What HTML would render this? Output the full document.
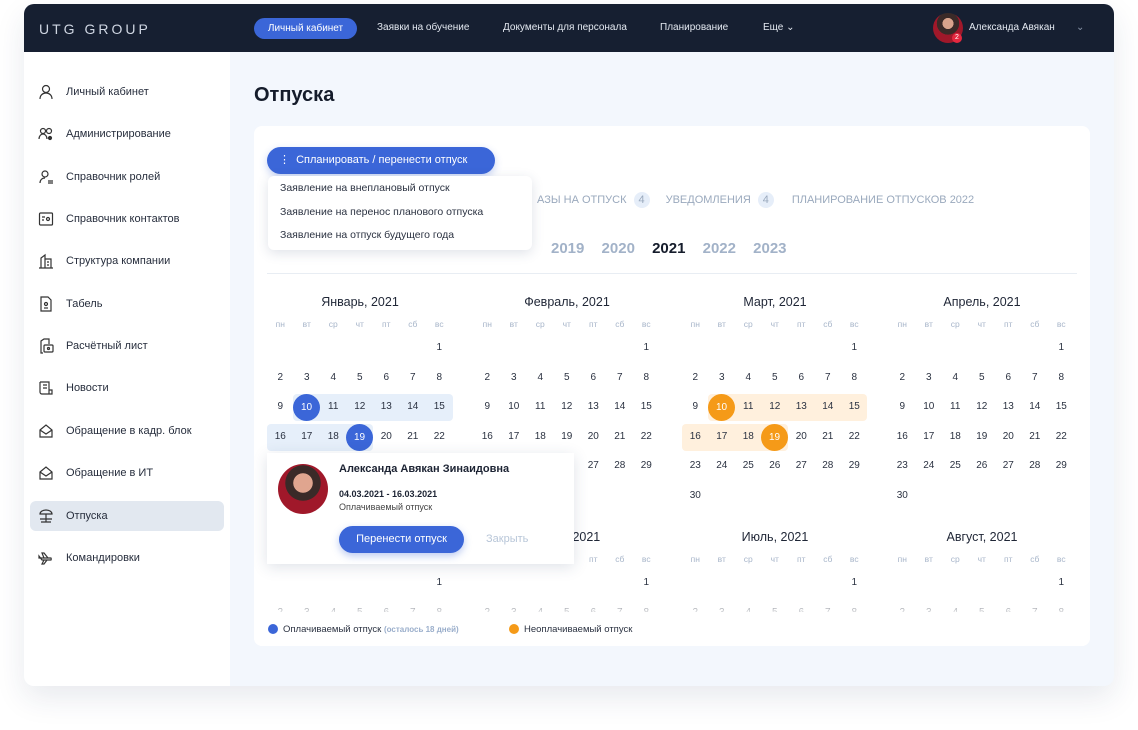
<!DOCTYPE html>
<html><head><meta charset="utf-8"><style>
*{box-sizing:border-box;margin:0;padding:0}
body{width:1138px;height:730px;background:#fff;font-family:"Liberation Sans",sans-serif;position:relative;overflow:hidden;color:#1c2333}
.frame{position:absolute;left:24px;top:4px;width:1090px;height:682px;border-radius:10px;overflow:hidden;background:#f3f7fd;box-shadow:0 12px 30px rgba(30,50,90,.10)}
.hdr{position:absolute;left:0;top:0;width:1090px;height:48px;background:#161f31}
.logo{position:absolute;left:15px;top:17px;color:#cfd6e2;font-size:14px;letter-spacing:3px}
.nav{position:absolute;top:18px;font-size:10px;color:#e3e8f0}
.pill{position:absolute;left:230px;top:14px;width:103px;height:21px;border-radius:11px;background:#3b66d8;color:#fff;font-size:10px;text-align:center;line-height:21px}
.side{position:absolute;left:0;top:48px;width:206px;height:634px;background:#fff}
.si{position:absolute;left:6px;width:194px;height:30px;font-size:11px;color:#262d3c;line-height:30px;padding-left:36px;border-radius:6px}
.si svg{position:absolute;left:8px;top:7px}
.si.act{background:#e2e8f0}
h1{position:absolute;left:230px;top:80px;font-size:20px;font-weight:bold;color:#151c2b}
.card{position:absolute;left:230px;top:122px;width:836px;height:520px;background:#fff;border-radius:8px;overflow:hidden}
.m{position:absolute;width:186px}
.mt{position:absolute;left:0;width:186px;text-align:center;font-size:12.5px;color:#1f2636}
.wd,.r{position:absolute;left:0;display:flex}
.wd span{width:26.5px;text-align:center;font-size:8.5px;color:#a8b6ca}
.r span{width:26.5px;height:29.5px;line-height:29.5px;text-align:center;font-size:10px;color:#2b3241;position:relative}
.c{position:absolute;width:27px;height:27px;border-radius:50%;color:#fff;font-size:10px;text-align:center;line-height:27px}
.band{position:absolute;height:27px;border-radius:4px}
.bdg{display:inline-block;width:16px;height:16px;border-radius:50%;background:#e6eef9;text-align:center;line-height:16px;margin-left:4px}
</style></head><body>
<div class="frame">
<div class="hdr">
<div class="logo">UTG GROUP</div>
<div class="pill">Личный кабинет</div>
<div class="nav" style="left:353px">Заявки на обучение</div>
<div class="nav" style="left:479px">Документы для персонала</div>
<div class="nav" style="left:636px">Планирование</div>
<div class="nav" style="left:739px">Еще &#8964;</div>
<div style="position:absolute;left:909px;top:9px;width:30px;height:30px;border-radius:50%;background:radial-gradient(circle at 50% 35%,#d9a38c 0 22%,#3a2a28 23% 45%,#a0182a 46%)"></div>
<div style="position:absolute;left:928px;top:29px;width:10px;height:10px;border-radius:50%;background:#e5283f;color:#fff;font-size:7px;text-align:center;line-height:10px">2</div>
<div class="nav" style="left:945px">Александа Авякан</div>
<div class="nav" style="left:1052px;color:#8894a8">&#8964;</div>
</div>
<div class="side">
<div class="si" style="top:25px"><svg width="16" height="16" fill="none" stroke="#333" stroke-width="1.2"><circle cx="8" cy="5" r="3.5"/><path d="M2 15c0-4 3-6 6-6s6 2 6 6"/></svg>Личный кабинет</div>
<div class="si" style="top:67px"><svg width="16" height="16" fill="none" stroke="#333" stroke-width="1.2"><circle cx="5" cy="5" r="2.5"/><circle cx="11" cy="5" r="2.5"/><path d="M1 13c0-3 2-5 4-5s4 2 4 5"/><circle cx="12" cy="12" r="1.5" fill="#333"/></svg>Администрирование</div>
<div class="si" style="top:110px"><svg width="16" height="16" fill="none" stroke="#333" stroke-width="1.2"><circle cx="7" cy="5" r="3"/><path d="M2 14c0-3 2-5 5-5M10 12h5M10 14h5"/></svg>Справочник ролей</div>
<div class="si" style="top:152px"><svg width="16" height="16" fill="none" stroke="#333" stroke-width="1.2"><rect x="1.5" y="2" width="13" height="12" rx="1"/><circle cx="10" cy="8" r="1.5"/><path d="M4 6h3M4 9h2"/></svg>Справочник контактов</div>
<div class="si" style="top:194px"><svg width="16" height="16" fill="none" stroke="#333" stroke-width="1.2"><path d="M1 15h14M3 15V5l4-3v13M7 6h6v9M9 9h2M9 12h2"/></svg>Структура компании</div>
<div class="si" style="top:237px"><svg width="16" height="16" fill="none" stroke="#333" stroke-width="1.2"><path d="M3 1h7l3 3v11H3z"/><circle cx="8" cy="8" r="1.5"/><path d="M6 12h4"/></svg>Табель</div>
<div class="si" style="top:279px"><svg width="16" height="16" fill="none" stroke="#333" stroke-width="1.2"><path d="M5 15H3V3l3-2h5v5"/><rect x="6" y="7" width="9" height="7" rx="1"/><circle cx="10.5" cy="10.5" r="1"/></svg>Расчётный лист</div>
<div class="si" style="top:321px"><svg width="16" height="16" fill="none" stroke="#333" stroke-width="1.2"><path d="M2 2h9v12H4M4 14a2 2 0 01-2-2V2M11 10h3v4h-10M5 5h4M5 8h4"/></svg>Новости</div>
<div class="si" style="top:364px"><svg width="16" height="16" fill="none" stroke="#333" stroke-width="1.2"><path d="M2 7l6-5 6 5v7H2zM2 7l6 4 6-4"/></svg>Обращение в кадр. блок</div>
<div class="si" style="top:406px"><svg width="16" height="16" fill="none" stroke="#333" stroke-width="1.2"><path d="M2 7l6-5 6 5v7H2zM2 7l6 4 6-4"/></svg>Обращение в ИТ</div>
<div class="si act" style="top:449px"><svg width="16" height="16" fill="none" stroke="#333" stroke-width="1.2"><path d="M2 6a6 4 0 0112 0zM8 6v8M2 11h12M3 14h10"/></svg>Отпуска</div>
<div class="si" style="top:491px"><svg width="16" height="16" fill="none" stroke="#333" stroke-width="1.2"><path d="M1 8h12a2 2 0 010 2H4L1 6zM6 8L4 3h2l4 5M6 10l-2 4h2l3-4"/></svg>Командировки</div>
</div>
<h1>Отпуска</h1>
<div class="card">
<div style="position:absolute;left:283px;top:66px;font-size:11px;color:#9aa9bd">АЗЫ НА ОТПУСК <span class="bdg">4</span><span style="margin-left:16px">УВЕДОМЛЕНИЯ</span> <span class="bdg">4</span><span style="margin-left:18px">ПЛАНИРОВАНИЕ ОТПУСКОВ 2022</span></div>
<div style="position:absolute;left:297px;top:114px;font-size:15px;font-weight:bold;color:#a2b2c8;word-spacing:13px">2019 2020 <span style="color:#151c2b">2021</span> 2022 2023</div>
<div style="position:absolute;left:13px;top:147px;width:810px;height:1px;background:#e8edf3"></div>
<div style="position:absolute;left:0;top:150px;width:836px;height:336px;overflow:hidden">
<div class="band" style="left:39px;top:118px;width:160px;background:#e6effa"></div>
<div class="band" style="left:13px;top:148px;width:106px;background:#e6effa"></div>
<div class="band" style="left:454px;top:118px;width:159px;background:#fff0dd"></div>
<div class="band" style="left:428px;top:148px;width:106px;background:#fff0dd"></div>
</div>
<div id="cal" style="position:absolute;left:0;top:150px;width:836px;height:336px;overflow:hidden"></div>
<div style="position:absolute;left:0;top:150px;width:836px;height:336px;overflow:hidden">
<div class="c" style="left:39px;top:118px;background:#3b66d8">10</div>
<div class="c" style="left:92px;top:148px;background:#3b66d8">19</div>
<div class="c" style="left:454px;top:118px;background:#f59a18">10</div>
<div class="c" style="left:507px;top:148px;background:#f59a18">19</div>
</div>
<div style="position:absolute;left:0;top:468px;width:836px;height:18px;background:linear-gradient(rgba(255,255,255,0),rgba(255,255,255,.8))"></div>
<div style="position:absolute;left:0;top:486px;width:836px;height:34px;background:#fff;font-size:9.5px;color:#2b3241">
<span style="position:absolute;left:14px;top:12px;width:10px;height:10px;border-radius:50%;background:#3b66d8"></span>
<span style="position:absolute;left:29px;top:12px">Оплачиваемый отпуск <b style="color:#9aaecb;font-size:8px">(осталось 18 дней)</b></span>
<span style="position:absolute;left:255px;top:12px;width:10px;height:10px;border-radius:50%;background:#f59a18"></span>
<span style="position:absolute;left:270px;top:12px">Неоплачиваемый отпуск</span>
</div>
<div style="position:absolute;left:13px;top:327px;width:307px;height:111px;background:#fff;box-shadow:0 3px 14px rgba(40,60,100,.15)">
<div style="position:absolute;left:11px;top:11px;width:50px;height:50px;border-radius:50%;background:radial-gradient(circle at 50% 38%,#e0a58f 0 24%,#3a2a28 25% 44%,#a0182a 45%)"></div>
<div style="position:absolute;left:72px;top:10px;font-size:11px;font-weight:bold">Александа Авякан Зинаидовна</div>
<div style="position:absolute;left:72px;top:36px;font-size:9px;font-weight:bold">04.03.2021 - 16.03.2021</div>
<div style="position:absolute;left:72px;top:49px;font-size:9px;color:#444">Оплачиваемый отпуск</div>
<div style="position:absolute;left:72px;top:73px;width:125px;height:27px;border-radius:14px;background:#3b66d8;color:#fff;font-size:11px;text-align:center;line-height:27px;box-shadow:0 3px 8px rgba(59,102,216,.35)">Перенести отпуск</div>
<div style="position:absolute;left:219px;top:80px;font-size:11px;color:#b8c6d8">Закрыть</div>
</div>
<div style="position:absolute;left:13px;top:21px;width:228px;height:27px;border-radius:14px;background:#3b66d8;color:#fff;font-size:11px;line-height:27px;padding-left:12px;box-shadow:0 3px 8px rgba(59,102,216,.3)">&#8942;&nbsp;&nbsp;Спланировать / перенести отпуск</div>
<div style="position:absolute;left:14px;top:50px;width:264px;height:74px;background:#fff;border-radius:6px;box-shadow:0 3px 12px rgba(40,60,100,.15);font-size:10.5px;color:#2b3241">
<div style="position:absolute;left:12px;top:6px">Заявление на внеплановый отпуск</div>
<div style="position:absolute;left:12px;top:30px">Заявление на перенос планового отпуска</div>
<div style="position:absolute;left:12px;top:53px">Заявление на отпуск будущего года</div>
</div>
</div>
</div>
<script>
var names=[["Январь, 2021",13,0],["Февраль, 2021",220,0],["Март, 2021",428,0],["Апрель, 2021",635,0],["Май, 2021",13,235],["Июнь, 2021",220,235],["Июль, 2021",428,235],["Август, 2021",635,235]];
var cal=document.getElementById('cal'),h='';
var wd='<div class="wd" style="top:43px"><span>пн</span><span>вт</span><span>ср</span><span>чт</span><span>пт</span><span>сб</span><span>вс</span></div>';
names.forEach(function(n){var s='<div class="m" style="left:'+n[1]+'px;top:'+n[2]+'px"><div class="mt" style="top:19px">'+n[0]+'</div>'+wd;
var rows=[['','','','','','','1'],[2,3,4,5,6,7,8],[9,10,11,12,13,14,15],[16,17,18,19,20,21,22],[23,24,25,26,27,28,29],[30,'','','','','','']];
rows.forEach(function(r,i){s+='<div class="r" style="top:'+(57+i*29.5)+'px">';r.forEach(function(d){s+='<span>'+d+'</span>'});s+='</div>'});
h+=s+'</div>';});
cal.innerHTML=h;
</script>
</body></html>
